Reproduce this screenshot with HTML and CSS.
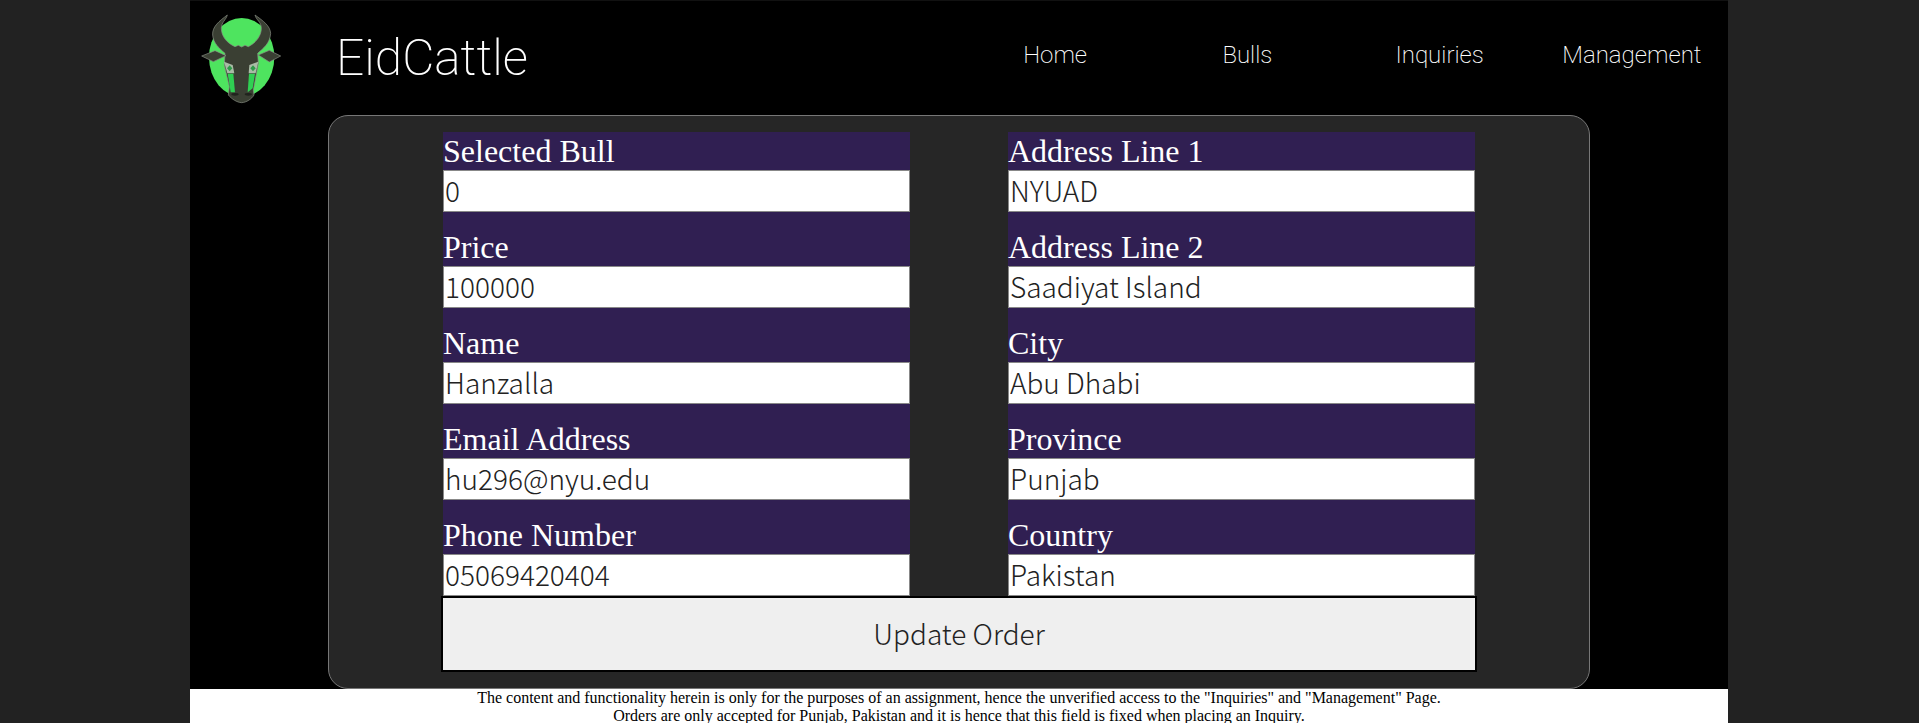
FILE: index.html
```html
<!DOCTYPE html>

<html>

<head>
    <title>EidCattle</title>
    <meta charset="utf-8">

    <link rel="stylesheet" href="styles.css">
</head>

<body>
    <div class="page">
        <header class="top">
            <div class="brand">
                <svg class="logo" viewBox="0 0 330 315" width="110" height="105">
                    <ellipse cx="155" cy="157" rx="98" ry="118" fill="#4ee45f" />
                    <path class="hide" d="M112 30 C88 48 66 65 68 90 C70 115 88 130 105 145 L103 180 L118 245 L115 270 C125 282 140 292 155 293 C170 292 185 282 192 270 L190 255 L205 175 L203 145 C220 130 240 115 242 85 C240 62 220 48 195 30 C198 45 214 50 214 70 C214 95 195 115 175 125 L165 121 L155 126 L145 121 L135 125 C112 115 94 95 94 70 C94 52 108 45 112 30 Z" />
                    <path class="hide" d="M35 153 L75 137 L108 152 L70 170 Z" />
                    <path class="hide" d="M205 150 L238 136 L272 153 L238 171 Z" />
                    <path d="M102 170 L128 180 L133 205 L112 205 Z" fill="#a9bba6" />
                    <path d="M205 170 L178 180 L176 205 L197 205 Z" fill="#a9bba6" />
                    <path d="M119 181 L127 190 L119 199 L111 190 Z" fill="#2f9a4a" />
                    <path d="M189 181 L197 190 L189 199 L181 190 Z" fill="#2f9a4a" />
                    <path d="M113 206 L130 206 L135 262 L122 262 Z" fill="#2fd052" />
                    <path d="M177 206 L195 206 L188 250 L173 262 Z" fill="#2fd052" />
                    <ellipse cx="135" cy="268" rx="11" ry="4" fill="#20231d" />
                    <ellipse cx="175" cy="268" rx="11" ry="4" fill="#20231d" />
                </svg>
                <h1 class="title">EidCattle</h1>
            </div>
            <nav class="menu">
                <a href="#">Home</a>
                <a href="#">Bulls</a>
                <a href="#">Inquiries</a>
                <a href="#">Management</a>
            </nav>
        </header>

        <main class="main">
            <form class="panel">
                <div class="columns">
                    <div class="col">
                        <label class="field">Selected Bull <input type="text" value="0"></label>
                        <label class="field">Price <input type="text" value="100000"></label>
                        <label class="field">Name <input type="text" value="Hanzalla"></label>
                        <label class="field">Email Address <input type="text" value="hu296@nyu.edu"></label>
                        <label class="field">Phone Number <input type="text" value="05069420404"></label>
                    </div>
                    <div class="col">
                        <label class="field">Address Line 1 <input type="text" value="NYUAD"></label>
                        <label class="field">Address Line 2 <input type="text" value="Saadiyat Island"></label>
                        <label class="field">City <input type="text" value="Abu Dhabi"></label>
                        <label class="field">Province <input type="text" value="Punjab"></label>
                        <label class="field">Country <input type="text" value="Pakistan"></label>
                    </div>
                </div>
                <button class="submit" type="button">Update Order</button>
            </form>
        </main>

        <footer class="note">
            The content and functionality herein is only for the purposes of an assignment, hence the unverified access to the "Inquiries" and "Management" Page.<br>
            Orders are only accepted for Punjab, Pakistan and it is hence that this field is fixed when placing an Inquiry.
        </footer>
    </div>
</body>

</html>
```

FILE: styles.css
```css
html,
body {
    height: 100%;
    margin: 0;
    padding: 0;
    overflow: hidden;
}

body {
    background: #222;
    font-family: "Liberation Serif", serif;
}

.page {
    width: 1538px;
    margin: 0 0 0 190px;
    background: #000;
}

.top {
    display: flex;
    height: 115px;
    border-top: 1px solid #111;
    box-sizing: border-box;
}

.brand {
    width: 769px;
    display: flex;
    align-items: flex-start;
}

.logo {
    margin-top: 4px;
}

.title {
    margin: 28px 0 0 36px;
    font: 200 49.6px "Roboto", sans-serif;
    color: #fff;
}

.menu {
    width: 769px;
    display: flex;
    padding-top: 40px;
    box-sizing: border-box;
}

.menu a {
    flex: 1;
    text-align: center;
    font: 200 24px "Roboto", sans-serif;
    color: #fff;
    text-decoration: none;
}

.main {
    padding-left: 138px;
}

.panel {
    width: 1262px;
    height: 574px;
    box-sizing: border-box;
    padding-top: 16px;
    background: #262626;
    border: 1px solid #777;
    border-radius: 20px;
}

.columns {
    display: flex;
    justify-content: center;
    gap: 98px;
}

.col {
    width: 467px;
    background: #301f52;
}

.field {
    display: block;
    padding-top: 16px;
    color: #fff;
    font-size: 32px;
    line-height: 38px;
}

.col .field:first-child {
    padding-top: 0;
}

.field input {
    display: block;
    width: 100%;
    height: 42px;
    margin: 0;
    padding: 0 1px 2px;
    box-sizing: border-box;
    border: 1px solid #888;
    background: #fff;
    font: 200 28px "Noto Sans CJK SC", "Noto Sans", sans-serif;
    color: #222;
}

.submit {
    display: block;
    width: 1036px;
    height: 76px;
    margin: 0 auto;
    padding: 0 0 2px;
    box-sizing: border-box;
    border: 2px solid #000;
    background: #efefef;
    font: 200 28px "Noto Sans CJK SC", "Noto Sans", sans-serif;
    color: #222;
}

.note {
    height: 34px;
    overflow: hidden;
    background: #fff;
    color: #000;
    text-align: center;
    font-size: 16px;
    line-height: 18px;
}

.hide {
    fill: #3a3f33;
    stroke: #8a8f85;
    stroke-width: 2;
}
```
